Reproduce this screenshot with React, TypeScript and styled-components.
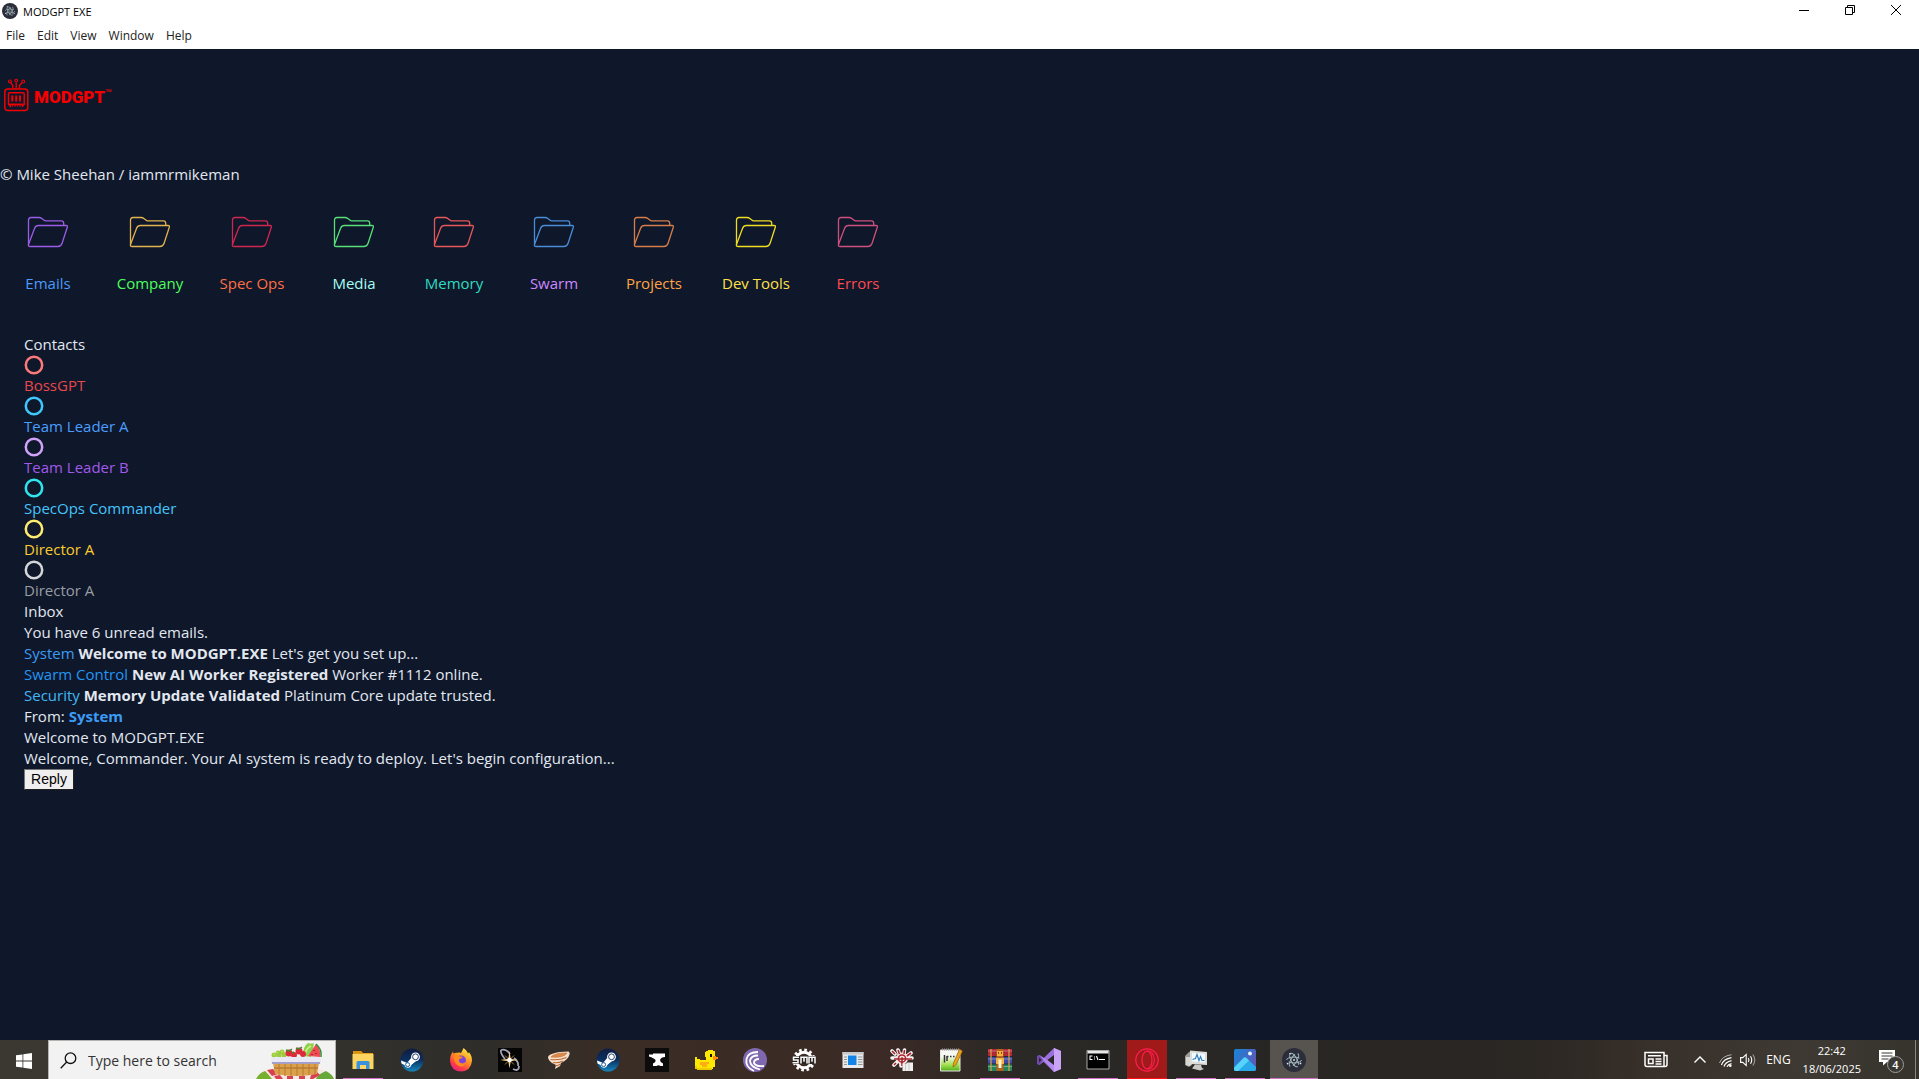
import React from "react";
import styled, { createGlobalStyle } from "styled-components";

const GlobalStyle = createGlobalStyle`
  * { box-sizing: border-box; }
  body {
    margin: 0;
    font-family: "Open Sans", "Noto Sans", sans-serif;
    background: #0f172a;
  }
  svg { display: block; flex: none; }
`;

const Desktop = styled.div`
  min-height: 100vh;
  display: flex;
  flex-direction: column;
  background: #0f172a;
  color: #e2e8f0;
  font-size: 15px;
  line-height: 21px;
`;

/* ---------- window frame ---------- */

const WindowFrame = styled.header`
  background: #ffffff;
  color: #000000;
  font-size: 12px;
  height: 49px;
`;

const TitleBar = styled.div`
  display: flex;
  justify-content: space-between;
  height: 22px;
`;

const WindowTitle = styled.div`
  display: flex;
  align-items: center;
  gap: 5px;
  padding-left: 2px;
  font-size: 11px;
`;

const WindowControls = styled.div`
  display: flex;
`;

const WindowButton = styled.button`
  width: 46px;
  height: 20px;
  padding: 0;
  border: 0;
  background: transparent;
  display: grid;
  place-items: center;
`;

const MenuBar = styled.nav`
  display: flex;
  align-items: center;
  height: 27px;
`;

const MenuButton = styled.button`
  border: 0;
  padding: 0 6px;
  background: transparent;
  font: 12px/18px "Open Sans", sans-serif;
  color: #222222;
`;

/* ---------- app content ---------- */

const Content = styled.main`
  flex: 1;
`;

const Logo = styled.div`
  display: flex;
  align-items: center;
  gap: 5px;
  height: 115px;
  padding: 0 0 24px 3px;
  color: #f40000;
`;

const LogoName = styled.h1`
  display: flex;
  margin: 0;
  padding-top: 4px;
  font: 900 17px/20px "Roboto", sans-serif;
`;

const TradeMark = styled.span`
  font-size: 11px;
  font-weight: 500;
  line-height: 14px;
`;

const Copyright = styled.p`
  margin: 0;
`;

const FolderBar = styled.nav`
  display: flex;
  gap: 6px;
  padding: 31px 0 40px;
`;

const FolderLink = styled.a<{ $width: number; $color: string }>`
  width: ${(p) => p.$width}px;
  display: flex;
  flex-direction: column;
  align-items: center;
  gap: 25px;
  color: ${(p) => p.$color};
  text-decoration: none;
  white-space: nowrap;
`;

const Panel = styled.section`
  padding-left: 24px;
`;

const PanelTitle = styled.h2`
  margin: 0;
  font-size: 15px;
  line-height: 21px;
  font-weight: 400;
`;

const ContactList = styled.ul`
  margin: 0;
  padding: 0;
  list-style: none;
`;

const Contact = styled.li<{ $color: string }>`
  color: ${(p) => p.$color};
`;

const StatusSlot = styled.div`
  height: 20px;
  display: flex;
  align-items: center;
`;

const Line = styled.p`
  margin: 0;
`;

const Sender = styled.span<{ $color: string }>`
  color: ${(p) => p.$color};
`;

const ReplyButton = styled.button`
  display: block;
  padding: 1px 6px;
  font: 14px/17px "Liberation Sans", Arial, sans-serif;
  height: 21px;
  width: 50px;
  color: #000000;
  background: #efefef;
  border: 1px outset #767676;
`;

/* ---------- taskbar ---------- */

const Taskbar = styled.footer`
  display: flex;
  align-items: stretch;
  height: 39px;
  overflow: hidden;
  color: #ffffff;
  background: linear-gradient(
    90deg,
    #3b3832 0%,
    #33312c 18%,
    #2e2d29 25%,
    #3a2d26 32%,
    #3b2a25 46%,
    #2b2926 53%,
    #282624 66%,
    #2b2723 80%,
    #38302a 86%,
    #3e3a33 94%,
    #36332d 100%
  );
`;

const StartButton = styled.button`
  width: 48px;
  padding: 2px 0 0;
  border: 0;
  background: transparent;
  display: grid;
  place-items: center;
`;

const SearchBox = styled.label`
  display: flex;
  align-items: center;
  width: 288px;
  padding-left: 11px;
  gap: 11px;
  background: #f2f2f2;
  border: 1px solid #b5b3b0;
  border-bottom: 0;
`;

const SearchInput = styled.input`
  flex: 1;
  min-width: 0;
  padding: 2px 0 0;
  border: 0;
  outline: 0;
  background: transparent;
  font: 14px/20px "Open Sans", sans-serif;
  &::placeholder { color: #333333; opacity: 1; }
`;

const AppList = styled.div`
  display: flex;
  gap: 9px;
  padding-left: 7px;
`;

const AppButton = styled.button<{ $state?: string }>`
  width: ${(p) => (p.$state === "active" ? 48 : 40)}px;
  margin: 0 ${(p) => (p.$state === "active" ? -4 : 0)}px;
  padding: 1px 0 0;
  border: 0;
  display: grid;
  place-items: center;
  background: ${(p) =>
    p.$state === "active" ? "#57534f" : p.$state === "alert" ? "#a01a1a" : "transparent"};
  box-shadow: ${(p) =>
    p.$state === "alert"
      ? "inset 0 -1px #ff1010"
      : p.$state
      ? "inset 0 -1px #d272c8"
      : "none"};
`;

const Tray = styled.div`
  margin-left: auto;
  display: flex;
  align-items: center;
`;

const TrayButton = styled.button<{ $gap: number }>`
  margin: 0 ${(p) => p.$gap}px 0 0;
  padding: 1px 0 0;
  border: 0;
  background: transparent;
  color: inherit;
  font: 12px/18px "Open Sans", sans-serif;
  text-align: center;
`;

const Clock = styled.time`
  display: block;
  font-size: 11px;
`;

const NotificationIcon = styled.span`
  position: relative;
  display: block;
  width: 26px;
  height: 26px;
`;

const Badge = styled.span`
  position: absolute;
  right: 0;
  bottom: 0;
  width: 17px;
  height: 17px;
  border: 1px solid #a09d98;
  border-radius: 50%;
  background: #3a3833;
  font-size: 11px;
  font-weight: 600;
  line-height: 15px;
`;

const ShowDesktop = styled.button`
  width: 4px;
  height: 100%;
  padding: 0;
  border: 0;
  border-left: 1px solid #8a8782;
  background: transparent;
`;

/* ---------- drawings ---------- */

const Electron = ({ size }: { size: number }) => (
  <svg width={size} height={size} viewBox="0 0 24 24" fill="none">
    <circle cx="12" cy="12" r="12" fill="#2b2e3a" />
    <g stroke="#bfd6dc" strokeWidth="0.9" opacity="0.85">
      <ellipse cx="12" cy="12" rx="7.5" ry="2.9" strokeDasharray="14 3" />
      <ellipse cx="12" cy="12" rx="7.5" ry="2.9" transform="rotate(60 12 12)" strokeDasharray="15 2" />
      <ellipse cx="12" cy="12" rx="7.5" ry="2.9" transform="rotate(120 12 12)" strokeDasharray="14 3" />
    </g>
    <g fill="#d3e9ee">
      <circle cx="12" cy="12" r="0.9" />
      <circle cx="8" cy="5.8" r="0.9" />
      <circle cx="5.6" cy="15.6" r="0.9" />
      <circle cx="18.5" cy="15.4" r="0.9" />
    </g>
  </svg>
);

const Robot = () => (
  <svg width="26" height="34" viewBox="0 0 26 34" fill="none" stroke="currentColor">
    <rect x="1.8" y="11" width="23" height="21.5" rx="3" strokeWidth="1.5" />
    <path d="M6.500 14.800h13.500q1.200 0 1.200 1.200v10.500l-1.800 1.700v-2H7.300v2l-1.800-1.700V16q0-1.200 1-1.200zM9.500 28.500v-2.500M12 28.500v-2.500M14.500 28.500v-2.500M17 28.500v-2.500" strokeWidth="1.400" />
    <path d="M9.300 17.500v6M13.200 17.500v6M17 17.500v6" strokeWidth="2" />
    <path d="M13.200 10.500V4.500M9.800 10.500V7.500L7.800 4.700M16.500 10.500V7.500L19 4.700" strokeWidth="1.300" />
    <circle cx="13.200" cy="2.600" r="1.400" strokeWidth="1.100" />
    <circle cx="6.900" cy="3.400" r="1.400" strokeWidth="1.100" />
    <circle cx="20.200" cy="3.400" r="1.400" strokeWidth="1.100" />
  </svg>
);

const FolderIcon = ({ color }: { color: string }) => (
  <svg width="42" height="32" viewBox="0 0 42 32" fill="none" stroke={color} strokeWidth="1.3" strokeLinejoin="round">
    <path d="M1.5 28.5V4Q1.5 1.5 4 1.5h8q1.6 0 2.800 1l2 1.600q.8.7 2 .7h15.600q2.300 0 2.300 2.400v2" />
    <path d="M1.500 28.500L7.600 12.300Q8.700 9.500 11.500 9.500H39q1.900 0 1.300 1.800l-5.200 16Q34 30.500 31 30.500H3.200q-2.300 0-1.700-2z" />
  </svg>
);

const Ring = ({ color }: { color: string }) => (
  <svg width="20" height="20" viewBox="0 0 20 20" fill="none">
    <circle cx="10" cy="10" r="8.200" stroke={color} strokeWidth="2.500" />
  </svg>
);

const I = ({ children }: { children: React.ReactNode }) => (
  <svg width="24" height="24" viewBox="0 0 24 24" fill="none">{children}</svg>
);

const Explorer = () => (
  <I>
    <path d="M2 3h8l2 2h10v15H2z" fill="#e5a11c" />
    <path d="M1.500 6h21v15h-21z" fill="#fcd462" />
    <path d="M5.500 21v-6.500q0-1.500 1.500-1.500h10q1.500 0 1.500 1.500V21h-3.500v-4H9v4z" fill="#3a92dc" />
    <path d="M2 3h8l1.500 2.500H2z" fill="#d99210" />
  </I>
);

const Steam = () => (
  <I>
    <defs>
      <linearGradient id="steam" x1="0" y1="0" x2="0" y2="1">
        <stop offset="0" stopColor="#101c40" />
        <stop offset="0.5" stopColor="#0b2f5f" />
        <stop offset="1" stopColor="#1687bd" />
      </linearGradient>
    </defs>
    <circle cx="12" cy="12" r="11.500" fill="url(#steam)" />
    <path d="M1 12.500l7 2.800L13 12l4 0-5.500 4.500q-1 3.500-4 3.200-2.400-.3-3-2.800L1.500 15.500z" fill="#fff" />
    <path d="M7 15l5-6 4 4-5 4z" fill="#fff" />
    <circle cx="15.500" cy="8.800" r="4.400" fill="#fff" />
    <circle cx="15.500" cy="8.800" r="2.900" stroke="#12305e" strokeWidth="0.9" />
    <circle cx="7.600" cy="16.600" r="2" stroke="#12508a" strokeWidth="0.9" />
  </I>
);

const Firefox = () => (
  <I>
    <defs>
      <linearGradient id="fox" x1="0.8" y1="0" x2="0.2" y2="1">
        <stop offset="0" stopColor="#fff04a" />
        <stop offset="0.4" stopColor="#ff9a22" />
        <stop offset="0.75" stopColor="#ff3c4a" />
        <stop offset="1" stopColor="#e8198a" />
      </linearGradient>
    </defs>
    <path d="M14.500 0q4 3 4.300 5.500 1-.5 1-1.500 3.500 4 3.200 8.800Q22 23 12 23.500 1.500 23 1 12.500 1 7 4 3.500l.6 2.200Q6 4.500 8 4.800 11 4 12 5q1.500-2.500 2.500-5z" fill="url(#fox)" />
    <circle cx="12" cy="12.500" r="5" fill="#7a43e0" />
    <path d="M4.500 8Q8 6 11 8.500l3 .2q-.5 1.800-3 2.100-2 1.500-.5 3.500 3 2.500 6.500-.5Q16 19 11 18.500 5 17 4.500 8z" fill="#ff8a1e" />
  </I>
);

const Star = () => (
  <I>
    <path d="M0 0h24v24H0z" fill="#050505" />
    <path d="M3 2q5-1.500 9 4M3 2q-1 3 4 9M15 21q6 3 6-3M20 18q1-4-4-8" stroke="#a5a5b8" strokeWidth="1.800" />
    <path d="M11.500 3l1.200 7.800 7 1.200-7 1.200-1.200 7.300-1.200-7.300L2 12l8.300-1.200z" fill="#f3d191" />
    <path d="M7 7.500l9 9M16 7.500l-9 9" stroke="#b98d4d" strokeWidth="0.900" />
    <circle cx="11.500" cy="12" r="2.200" fill="#fff" />
  </I>
);

const Tornado = () => (
  <I>
    <path d="M1 9Q3 4 21 3.500q2 0 1.500 3Q21 12 14 15l-1 3-5 3 1-4-4-2Q1 12 1 9z" fill="#f4dfcc" />
    <path d="M4 9q3-4 16-4Q17 10 4 9z" fill="#dc8a49" stroke="#c97a40" strokeWidth="0.800" />
    <path d="M3.500 11.500q8 1 16-2M6 14.500q5 1 10-1.500M8.500 17.500q2 .5 5-1.500" stroke="#bd6b35" strokeWidth="1.100" />
  </I>
);

const Anvil = () => (
  <I>
    <path d="M0 0h24v24H0z" fill="#0c0c0c" />
    <path d="M4 6.500h4V5.500h12V9q-4 .2-5 3 0 2 3 3.500V18h-2.500q-2-1.500-4 0H8v-2.500q3-1.500 2.500-3.500Q9 10 4 8.500z" fill="#fff" />
  </I>
);

const Duck = () => (
  <I>
    <path d="M14 2h5v1h2v5h-1v3h1v8h-2v2H3v-2H1V9h2v2h3v1h6V9h-1V4h1V3h2z" fill="#ffe800" />
    <path d="M16 6h2v3h-2z" fill="#111" />
    <path d="M19 8h3v1h2v2h-2v1h-3z" fill="#ff8a18" />
    <path d="M6 14h9v2h-2v3H8v-2H6z" fill="#ffad13" />
    <path d="M1 18h2v2h15v2H3v-1H1z" fill="#edc900" />
  </I>
);

const BitTorrent = () => (
  <I>
    <circle cx="12" cy="12" r="12" fill="#8068b0" />
    <g stroke="#fff" strokeWidth="1.800">
      <path d="M15 4Q5 4 3.500 11 2 19 11 23" />
      <path d="M15 7.500Q8 7.500 7 12.500 7 19 17 21.500" />
      <path d="M16 11q-5 0-5 4 2 4 10 3" />
    </g>
  </I>
);

const ModManager = () => (
  <I>
    <circle cx="12" cy="12" r="10" stroke="#fff" strokeWidth="3" strokeDasharray="2.600 2.636" />
    <circle cx="12" cy="12" r="7.800" stroke="#fff" strokeWidth="3" />
    <path d="M0 8h24v8H0z" fill="#2b2320" />
    <g stroke="#fff" strokeWidth="1.500">
      <path d="M7 9.200H1.500v2.800H6v2.800H.5M9 15.500V9.200h6v6.300M12 9.200v4.500M17 15.500V9.200h6v6.300M20 9.200v4.500" />
    </g>
  </I>
);

const NewsWindow = () => (
  <I>
    <path d="M1.500 4h21v16h-21z" fill="#e9e9e9" />
    <path d="M1.500 4h21v2.500h-21z" fill="#c5c9cc" />
    <path d="M7 7.500h8.500v9.500H7z" fill="#1284e6" />
    <path d="M3 9h3M3 11.500h3M3 14h3M17 9h4.500M17 11.500h4.500M17 14h4.500M17 16.500h4.500M3 16.500h3" stroke="#8d9499" />
  </I>
);

const Splatter = () => (
  <I>
    <g stroke="#f7f2f2" strokeWidth="3.600" strokeLinecap="round">
      <path d="M2 3l3 3M8 2l1.500 4M14.500 2L14 6M21 5l-4 3M2 10h20M4 17l3-3M11 10v8" />
    </g>
    <circle cx="12" cy="10.500" r="6" fill="#f3e6e6" />
    <g stroke="#a8242c" strokeWidth="1.600">
      <path d="M2 3l3 3M8 2l1.500 4M14.500 2L14 6M21 5l-4 3M4 11h18M4 17l2-2M12 10v8" />
    </g>
    <circle cx="12" cy="10.500" r="3.600" stroke="#a8242c" strokeWidth="1.500" />
    <circle cx="12" cy="10.500" r="1.200" fill="#a8242c" />
    <path d="M12.500 15.500h4l1-1h5.500v8.500h-10.500z" fill="#f0f0f0" />
    <path d="M15.500 16v7M19 15v8" stroke="#c9c4c4" strokeWidth="0.900" />
  </I>
);

const NotePlus = () => (
  <I>
    <defs>
      <linearGradient id="note" x1="0" y1="0" x2="0" y2="1">
        <stop offset="0.3" stopColor="#f6f9f2" />
        <stop offset="0.7" stopColor="#a5e052" />
        <stop offset="1" stopColor="#4fae18" />
      </linearGradient>
    </defs>
    <path d="M1.500 2h19.500v21H1.500z" fill="url(#note)" stroke="#e6e6e6" />
    <path d="M3 1.500h17" stroke="#999" strokeDasharray="1 1" strokeWidth="2" />
    <path d="M5.500 7v7.500M8 8.500h1.500M8 8v5M11 8.500h1.500M14 8.500h1.500" stroke="#333" strokeWidth="1.500" />
    <path d="M20.500 1l3 2-6.500 14-3 2 .5-4z" fill="#e8a321" stroke="#80510e" strokeWidth="0.600" />
  </I>
);

const WinRar = () => (
  <I>
    <path d="M0 1h24v7H0z" fill="#b2263a" />
    <path d="M0 9h24v6.500H0z" fill="#3c4aa8" />
    <path d="M0 16.500h24V23H0z" fill="#23835a" />
    <path d="M0 3h24M0 11h24M0 18.500h24" stroke="#fff" strokeOpacity=".35" />
    <path d="M3 1v22M21 1v22" stroke="#dba64b" strokeWidth="1.200" />
    <path d="M8.500 1h7v22h-7z" fill="#b4631c" />
    <path d="M9 3h6v5H9zM8 10h8v6H8z" fill="#f1b13b" />
    <path d="M10.500 11.500h3V20h-3z" fill="#fff1d8" />
    <path d="M10 5h1M13 5h1" stroke="#5b2a0c" strokeWidth="1.500" />
  </I>
);

const VisualStudio = () => (
  <I>
    <path d="M17 0l7 3v18l-7 3L6.500 13.800 2.500 17 0 15.800V8.200L2.500 7l4 3.200z" fill="#9b6fdc" />
    <path d="M17 0v24l7-3V3z" fill="#c7a4f5" />
    <path d="M2.500 7L17 24v-7z" fill="#b48af0" />
    <path d="M0 8.200L2.500 7 6 12l-3.500 5L0 15.800z" fill="#7046b0" />
    <path d="M17 7v10l-6.500-5zM2 9.500v5L4.500 12z" fill="#2b2926" />
  </I>
);

const Terminal = () => (
  <I>
    <path d="M1 2.500h22v18.500H1z" fill="#000" stroke="#a8a8a8" />
    <path d="M1.500 3h21v2.500h-21z" fill="#e8e8e8" />
    <path d="M6.500 8H4v3.500h2.500M8.500 8.500v1M8.500 10.500v1M10.500 8l1.500 4M13 11.500h6" stroke="#fff" strokeWidth="1.100" />
  </I>
);

const Opera = () => (
  <I>
    <circle cx="12" cy="12" r="11.200" stroke="#ff1e50" strokeWidth="1.200" />
    <ellipse cx="12" cy="12" rx="5" ry="8.800" stroke="#ff1e50" strokeWidth="1.200" />
    <path d="M12 3.200q6-1.500 7.500 8.800-1.500 10-7.500 8.800" stroke="#ff1e50" strokeWidth="1.100" />
  </I>
);

const Monitor = () => (
  <I>
    <path d="M1 8l4-4 3-1v14l-3 2-4-2z" fill="#9c9c98" />
    <path d="M2 9h5v8l-2 1-3-1z" fill="#d8d8d2" />
    <path d="M6 2.500l17 1.500v13L6 16z" fill="#dcdcd8" />
    <path d="M8 4.800l13 1v8.700L8 13.500z" fill="#f1f8ff" />
    <path d="M8.500 11.500l3-1 1.500-4 2 6 1.500-4 1.500 4h2.500" stroke="#2f7fc0" strokeWidth="1.100" />
    <path d="M11 16.500l6 .5 1 3 2 1-4 1.500-8-2z" fill="#c9c9c4" />
  </I>
);

const Photos = () => (
  <I>
    <defs>
      <linearGradient id="photo" x1="0" y1="0" x2="1" y2="0.6">
        <stop offset="0" stopColor="#1686d8" />
        <stop offset="1" stopColor="#5d58b8" />
      </linearGradient>
      <clipPath id="photoFrame"><rect x="1" y="1" width="22" height="22" rx="2" /></clipPath>
    </defs>
    <g clipPath="url(#photoFrame)">
      <path d="M1 1h22v22H1z" fill="url(#photo)" />
      <path d="M-2 22L10.500 10q1.500-1.400 3 0L26 22v4H-2z" fill="#2aa9ea" />
      <path d="M10.500 10q1.500-1.400 3 0l2.500 2.500L5 23H-2z" fill="#55d3fa" />
    </g>
    <circle cx="17" cy="5.500" r="2" fill="#e8f4ff" />
  </I>
);

const Basket = () => (
  <svg width="80" height="38" viewBox="0 0 80 38">
    <path d="M1 38q4-8 16-10h47q12 2 15 10z" fill="#f6e6e4" />
    <path d="M1 38q3-6 9-8 4 4 7 8z" fill="#77b02f" />
    <path d="M61 38q2-5 10-8 6 3 8 8z" fill="#67a838" />
    <path d="M12 29l6-1 5 5-6 2zM19 35l6-1 3 4h-7zM32 35h6v3h-6zM44 35h6v3h-6zM56 34l6-3 3 3-7 4h-3z" fill="#d8404f" />
    <g fill="#9ccb3c">
      <circle cx="19" cy="14" r="2.500" /><circle cx="23" cy="12" r="2.500" /><circle cx="27" cy="11" r="2.500" /><circle cx="24" cy="15" r="2.500" /><circle cx="29" cy="14" r="2.500" />
    </g>
    <g fill="#b9de62"><circle cx="22" cy="11.500" r="1" /><circle cx="27" cy="10.500" r="1" /><circle cx="19" cy="13.500" r="1" /></g>
    <path d="M48 15q0-10 5-13 3 1 6 0-1 8-3 14z" fill="#8fd04c" />
    <path d="M50 14q1-7 6-9" stroke="#d4f28a" strokeWidth="1.500" fill="none" />
    <g fill="#dd2a3a">
      <circle cx="34" cy="12" r="3.500" /><circle cx="39" cy="14" r="3" /><circle cx="44" cy="10" r="3.500" /><circle cx="48" cy="13" r="3" />
    </g>
    <path d="M31 9l3 1 3-2M41 7l3 1 3-2M37 12l2-1" stroke="#3d8a2e" strokeWidth="1.500" fill="none" />
    <path d="M61 3q5 5 4 13l-12-1z" fill="#f04a55" />
    <path d="M61 3q6 5 5 13" stroke="#348b3a" strokeWidth="1.500" fill="none" />
    <path d="M59 9v1M61 12v1M57 13v1" stroke="#4a1418" />
    <path d="M18 22h46l-2 11q-21 4-42 0z" fill="#dba04a" />
    <path d="M19 27h44" stroke="#a8692a" strokeWidth="1.200" />
    <path d="M24 23v11M30 23v12M36 23v12M42 23v12M48 23v12M54 23v11M60 23v10" stroke="#b87932" />
    <rect x="16" y="16" width="50" height="7" rx="2" fill="#e9e8f5" />
    <path d="M17 22h48" stroke="#8f88b8" strokeWidth="1.500" />
  </svg>
);

/* ---------- data ---------- */

const menus = ["File", "Edit", "View", "Window", "Help"];

const folders = [
  { name: "Emails", width: 96, text: "#4a9aff", icon: "#9b5de5" },
  { name: "Company", width: 96, text: "#4cff5c", icon: "#e3b34f" },
  { name: "Spec Ops", width: 96, text: "#ff6f43", icon: "#cf2750" },
  { name: "Media", width: 96, text: "#a5fff4", icon: "#57e078" },
  { name: "Memory", width: 92, text: "#2edcc0", icon: "#e5585a" },
  { name: "Swarm", width: 96, text: "#cc88ff", icon: "#4a8cd6" },
  { name: "Projects", width: 92, text: "#ffa345", icon: "#d67d4c" },
  { name: "Dev Tools", width: 100, text: "#ffe04a", icon: "#efdd24" },
  { name: "Errors", width: 92, text: "#ff4a4f", icon: "#cf4f7c" },
];

const contacts = [
  { name: "BossGPT", text: "#e8484c", ring: "#fb7a7a" },
  { name: "Team Leader A", text: "#4a9eff", ring: "#3fc8fa" },
  { name: "Team Leader B", text: "#a259ec", ring: "#d0a2fb" },
  { name: "SpecOps Commander", text: "#45c4fb", ring: "#2ee6ee" },
  { name: "Director A", text: "#facc2c", ring: "#fdec70" },
  { name: "Director A", text: "#9a9da3", ring: "#d4d6d9" },
];

const emails = [
  { from: "System", color: "#3b9cf5", subject: "Welcome to MODGPT.EXE", body: "Let's get you set up..." },
  { from: "Swarm Control", color: "#2196f3", subject: "New AI Worker Registered", body: "Worker #1112 online." },
  { from: "Security", color: "#40b8f5", subject: "Memory Update Validated", body: "Platinum Core update trusted." },
];

const apps: { name: string; icon: React.ReactNode; state?: string }[] = [
  { name: "File Explorer", icon: <Explorer />, state: "open" },
  { name: "Steam", icon: <Steam /> },
  { name: "Firefox", icon: <Firefox /> },
  { name: "Star", icon: <Star /> },
  { name: "Tornado", icon: <Tornado /> },
  { name: "Steam library", icon: <Steam /> },
  { name: "Anvil", icon: <Anvil /> },
  { name: "Duck", icon: <Duck /> },
  { name: "BitTorrent", icon: <BitTorrent /> },
  { name: "SMM", icon: <ModManager /> },
  { name: "Reader", icon: <NewsWindow /> },
  { name: "Splatter", icon: <Splatter /> },
  { name: "Notepad++", icon: <NotePlus /> },
  { name: "WinRAR", icon: <WinRar />, state: "open" },
  { name: "Visual Studio", icon: <VisualStudio /> },
  { name: "Command Prompt", icon: <Terminal />, state: "open" },
  { name: "Opera", icon: <Opera />, state: "alert" },
  { name: "Resource Monitor", icon: <Monitor />, state: "open" },
  { name: "Photos", icon: <Photos />, state: "open" },
  { name: "MODGPT", icon: <Electron size={24} />, state: "active" },
];

export default function App() {
  return (
    <Desktop>
      <GlobalStyle />
      <WindowFrame>
        <TitleBar>
          <WindowTitle>
            <Electron size={16} />
            MODGPT EXE
          </WindowTitle>
          <WindowControls>
            <WindowButton aria-label="Minimize">
              <svg width="10" height="10" viewBox="0 0 10 10"><path d="M0 5.500h10" stroke="#000" /></svg>
            </WindowButton>
            <WindowButton aria-label="Restore">
              <svg width="10" height="10" viewBox="0 0 10 10" fill="none" stroke="#000">
                <path d="M.5 2.500h7v7h-7zM2.500 2.500v-2h7v7h-2" />
              </svg>
            </WindowButton>
            <WindowButton aria-label="Close">
              <svg width="10" height="10" viewBox="0 0 10 10"><path d="M0 0l10 10M10 0L0 10" stroke="#000" /></svg>
            </WindowButton>
          </WindowControls>
        </TitleBar>
        <MenuBar>
          {menus.map((m) => <MenuButton key={m}>{m}</MenuButton>)}
        </MenuBar>
      </WindowFrame>

      <Content>
        <Logo>
          <Robot />
          <LogoName>MODGPT<TradeMark>™</TradeMark></LogoName>
        </Logo>
        <Copyright>© Mike Sheehan / iammrmikeman</Copyright>

        <FolderBar>
          {folders.map((f) => (
            <FolderLink key={f.name} href="#" $width={f.width} $color={f.text}>
              <FolderIcon color={f.icon} />
              {f.name}
            </FolderLink>
          ))}
        </FolderBar>

        <Panel>
          <PanelTitle>Contacts</PanelTitle>
          <ContactList>
            {contacts.map((c, i) => (
              <Contact key={i} $color={c.text}>
                <StatusSlot><Ring color={c.ring} /></StatusSlot>
                {c.name}
              </Contact>
            ))}
          </ContactList>
        </Panel>

        <Panel>
          <PanelTitle>Inbox</PanelTitle>
          <Line>You have 6 unread emails.</Line>
          {emails.map((e) => (
            <Line key={e.from}>
              <Sender $color={e.color}>{e.from}</Sender> <strong>{e.subject}</strong> {e.body}
            </Line>
          ))}
        </Panel>

        <Panel>
          <Line>From: <strong><Sender $color="#3b9cf5">System</Sender></strong></Line>
          <Line>Welcome to MODGPT.EXE</Line>
          <Line>Welcome, Commander. Your AI system is ready to deploy. Let's begin configuration...</Line>
          <ReplyButton>Reply</ReplyButton>
        </Panel>
      </Content>

      <Taskbar>
        <StartButton aria-label="Start">
          <svg width="16" height="16" viewBox="0 0 16 16" fill="#fff">
            <path d="M0 2.300l6.500-.9v6.200H0zM7.300 1.300L16 0v7.600H7.300zM0 8.400h6.500v6.200L0 13.700zM7.300 8.400H16V16l-8.700-1.300z" />
          </svg>
        </StartButton>
        <SearchBox>
          <svg width="17" height="17" viewBox="0 0 17 17" fill="none" stroke="#111" strokeWidth="1.300">
            <circle cx="10.500" cy="6.200" r="5.300" />
            <path d="M6.700 10L.7 16.200" />
          </svg>
          <SearchInput aria-label="Search" placeholder="Type here to search" />
          <Basket />
        </SearchBox>
        <AppList>
          {apps.map((a) => (
            <AppButton key={a.name} aria-label={a.name} $state={a.state}>{a.icon}</AppButton>
          ))}
        </AppList>
        <Tray>
          <TrayButton aria-label="News" $gap={26}>
            <svg width="24" height="18" viewBox="0 0 24 18" fill="none" stroke="#fff" strokeWidth="1.500">
              <path d="M1 1.500h19v14H3q-2 0-2-2zM20 4.500h3v9q0 2-2 2h-2" />
              <path d="M4 4.800h13M11.500 8h6M11.500 10.500h6M11.500 13h6M4.500 8h4.500v4.500H4.500z" />
            </svg>
          </TrayButton>
          <TrayButton aria-label="Show hidden icons" $gap={13}>
            <svg width="12" height="12" viewBox="0 0 12 12" fill="none" stroke="#fff" strokeWidth="1.400"><path d="M.5 8.500L6 3l5.500 5.500" /></svg>
          </TrayButton>
          <TrayButton aria-label="Network" $gap={8}>
            <svg width="13" height="13" viewBox="0 0 13 13" fill="none" stroke="#fff">
              <path d="M.5 9Q3 2 12.500 .7" opacity=".6" />
              <path d="M2.500 11Q4.500 5 12.500 3.700M5 12.500Q6.500 8 12.500 6.700M8 12.700Q9 10.300 12.500 9.700" strokeWidth="1.200" />
              <circle cx="11.300" cy="11.700" r="1.300" fill="#fff" stroke="none" />
            </svg>
          </TrayButton>
          <TrayButton aria-label="Volume" $gap={10}>
            <svg width="16" height="14" viewBox="0 0 16 14" fill="none" stroke="#fff" strokeWidth="1.100">
              <path d="M.6 4.600h2.200l3.400-3.200v11.200L2.800 9.400H.6zM8.300 5q1.300 2 0 4M10.500 3.300q2.500 3.700 0 7.400" />
              <path d="M12.800 1.500q4 5.500 0 11" opacity=".5" />
            </svg>
          </TrayButton>
          <TrayButton $gap={12}>ENG</TrayButton>
          <TrayButton $gap={17}>
            <Clock>22:42</Clock>
            <Clock>18/06/2025</Clock>
          </TrayButton>
          <TrayButton aria-label="Notifications" $gap={11}>
            <NotificationIcon>
              <svg width="18" height="20" viewBox="0 0 18 20">
                <path d="M1 3h16v12H9l-4 3.500V15H1z" fill="#fff" />
                <path d="M3.500 6h11M3.500 9h11M3.500 12h7" stroke="#3a3833" />
              </svg>
              <Badge>4</Badge>
            </NotificationIcon>
          </TrayButton>
          <ShowDesktop aria-label="Show desktop" />
        </Tray>
      </Taskbar>
    </Desktop>
  );
}
